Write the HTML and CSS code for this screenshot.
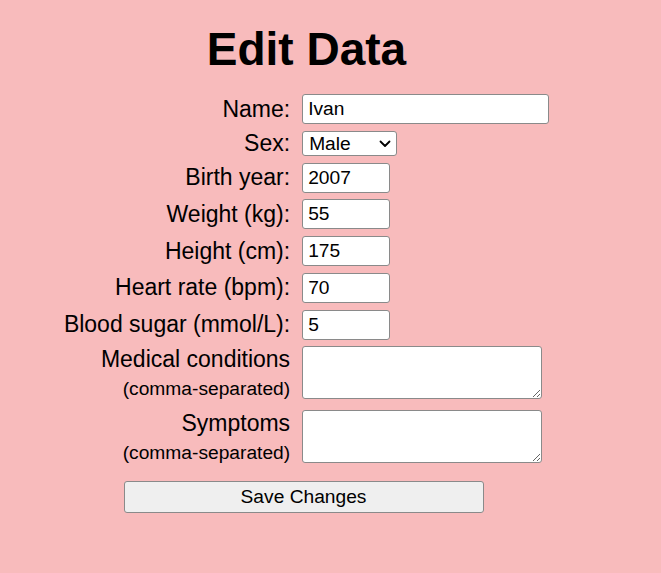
FILE: index.html
```html
<!DOCTYPE html>
<html lang="en">
<head>
<meta charset="utf-8">
<title>Edit Data</title>
<link rel="stylesheet" href="styles.css">
</head>
<body>
<main class="page">
  <h1 class="title">Edit Data</h1>
  <form class="form">
    <label class="label" for="name">Name:</label>
    <input class="field field-wide" id="name" type="text" value="Ivan">

    <label class="label" for="sex">Sex:</label>
    <span class="select-wrap">
      <select class="field select" id="sex">
        <option selected>Male</option>
        <option>Female</option>
      </select>
      <svg class="chevron" width="12" height="8" viewBox="0 0 12 8" aria-hidden="true">
        <path d="M1.5 1.5 L6 6 L10.5 1.5" fill="none" stroke="#000" stroke-width="1.8" stroke-linecap="round" stroke-linejoin="round"/>
      </svg>
    </span>

    <label class="label" for="birth">Birth year:</label>
    <input class="field field-short" id="birth" type="text" value="2007">

    <label class="label" for="weight">Weight (kg):</label>
    <input class="field field-short" id="weight" type="text" value="55">

    <label class="label" for="height">Height (cm):</label>
    <input class="field field-short" id="height" type="text" value="175">

    <label class="label" for="hr">Heart rate (bpm):</label>
    <input class="field field-short" id="hr" type="text" value="70">

    <label class="label" for="sugar">Blood sugar (mmol/L):</label>
    <input class="field field-short" id="sugar" type="text" value="5">

    <label class="label label-multi tight" for="cond">Medical conditions<br><small class="hint">(comma-separated)</small></label>
    <textarea class="area tight" id="cond"></textarea>

    <label class="label label-multi spaced" for="sym">Symptoms<br><small class="hint">(comma-separated)</small></label>
    <textarea class="area spaced" id="sym"></textarea>

    <button class="save" type="button">Save Changes</button>
  </form>
</main>
</body>
</html>
```

FILE: styles.css
```css
html, body {
  margin: 0;
  padding: 0;
  background: #f8bbbc;
}

body {
  font-family: "Liberation Sans", Arial, sans-serif;
  color: #000;
  min-height: 573px;
}

.page {
  display: flex;
  flex-direction: column;
  align-items: center;
  padding-right: 48px;
}

.title {
  margin: 23px 0 18px;
  font-size: 46px;
  font-weight: bold;
  line-height: 53px;
}

.form {
  display: grid;
  grid-template-columns: auto auto;
  column-gap: 12px;
  row-gap: 6.75px;
  align-items: center;
}

.label {
  justify-self: end;
  text-align: right;
  font-size: 23px;
  line-height: 25px;
}

.label-multi {
  align-self: start;
  height: 53px;
  line-height: 26.5px;
}

.hint {
  font-size: 19.2px;
  vertical-align: -2px;
}

.field {
  box-sizing: border-box;
  height: 30px;
  margin: 0;
  padding: 0 5px;
  border: 1px solid #8a8a8a;
  border-radius: 3px;
  background: #fff;
  font-family: "Liberation Sans", Arial, sans-serif;
  font-size: 19.2px;
  color: #000;
  justify-self: start;
}

.field-wide {
  width: 247px;
}

.field-short {
  width: 88px;
}

.select-wrap {
  position: relative;
  display: block;
  justify-self: start;
  width: 95px;
  height: 25px;
}

.select {
  display: block;
  appearance: none;
  -webkit-appearance: none;
  width: 95px;
  height: 25px;
  padding: 0 0 0 6px;
}

.chevron {
  position: absolute;
  right: 6px;
  top: 9px;
  pointer-events: none;
}

.area {
  box-sizing: border-box;
  width: 240px;
  height: 53px;
  margin: 0;
  border: 1px solid #8a8a8a;
  border-radius: 3px;
  background: #fff;
  font-family: "Liberation Sans", Arial, sans-serif;
  font-size: 19.2px;
  justify-self: start;
  align-self: start;
}

.tight {
  margin-top: -0.75px;
}

.spaced {
  margin-top: 4.5px;
}

.save {
  grid-column: 1 / -1;
  justify-self: center;
  margin: 11.25px 6px 0 0;
  box-sizing: border-box;
  width: 360px;
  height: 32px;
  border: 1px solid #8a8a8a;
  border-radius: 3px;
  background: #efefef;
  font-family: "Liberation Sans", Arial, sans-serif;
  font-size: 19.2px;
  color: #000;
}
```
